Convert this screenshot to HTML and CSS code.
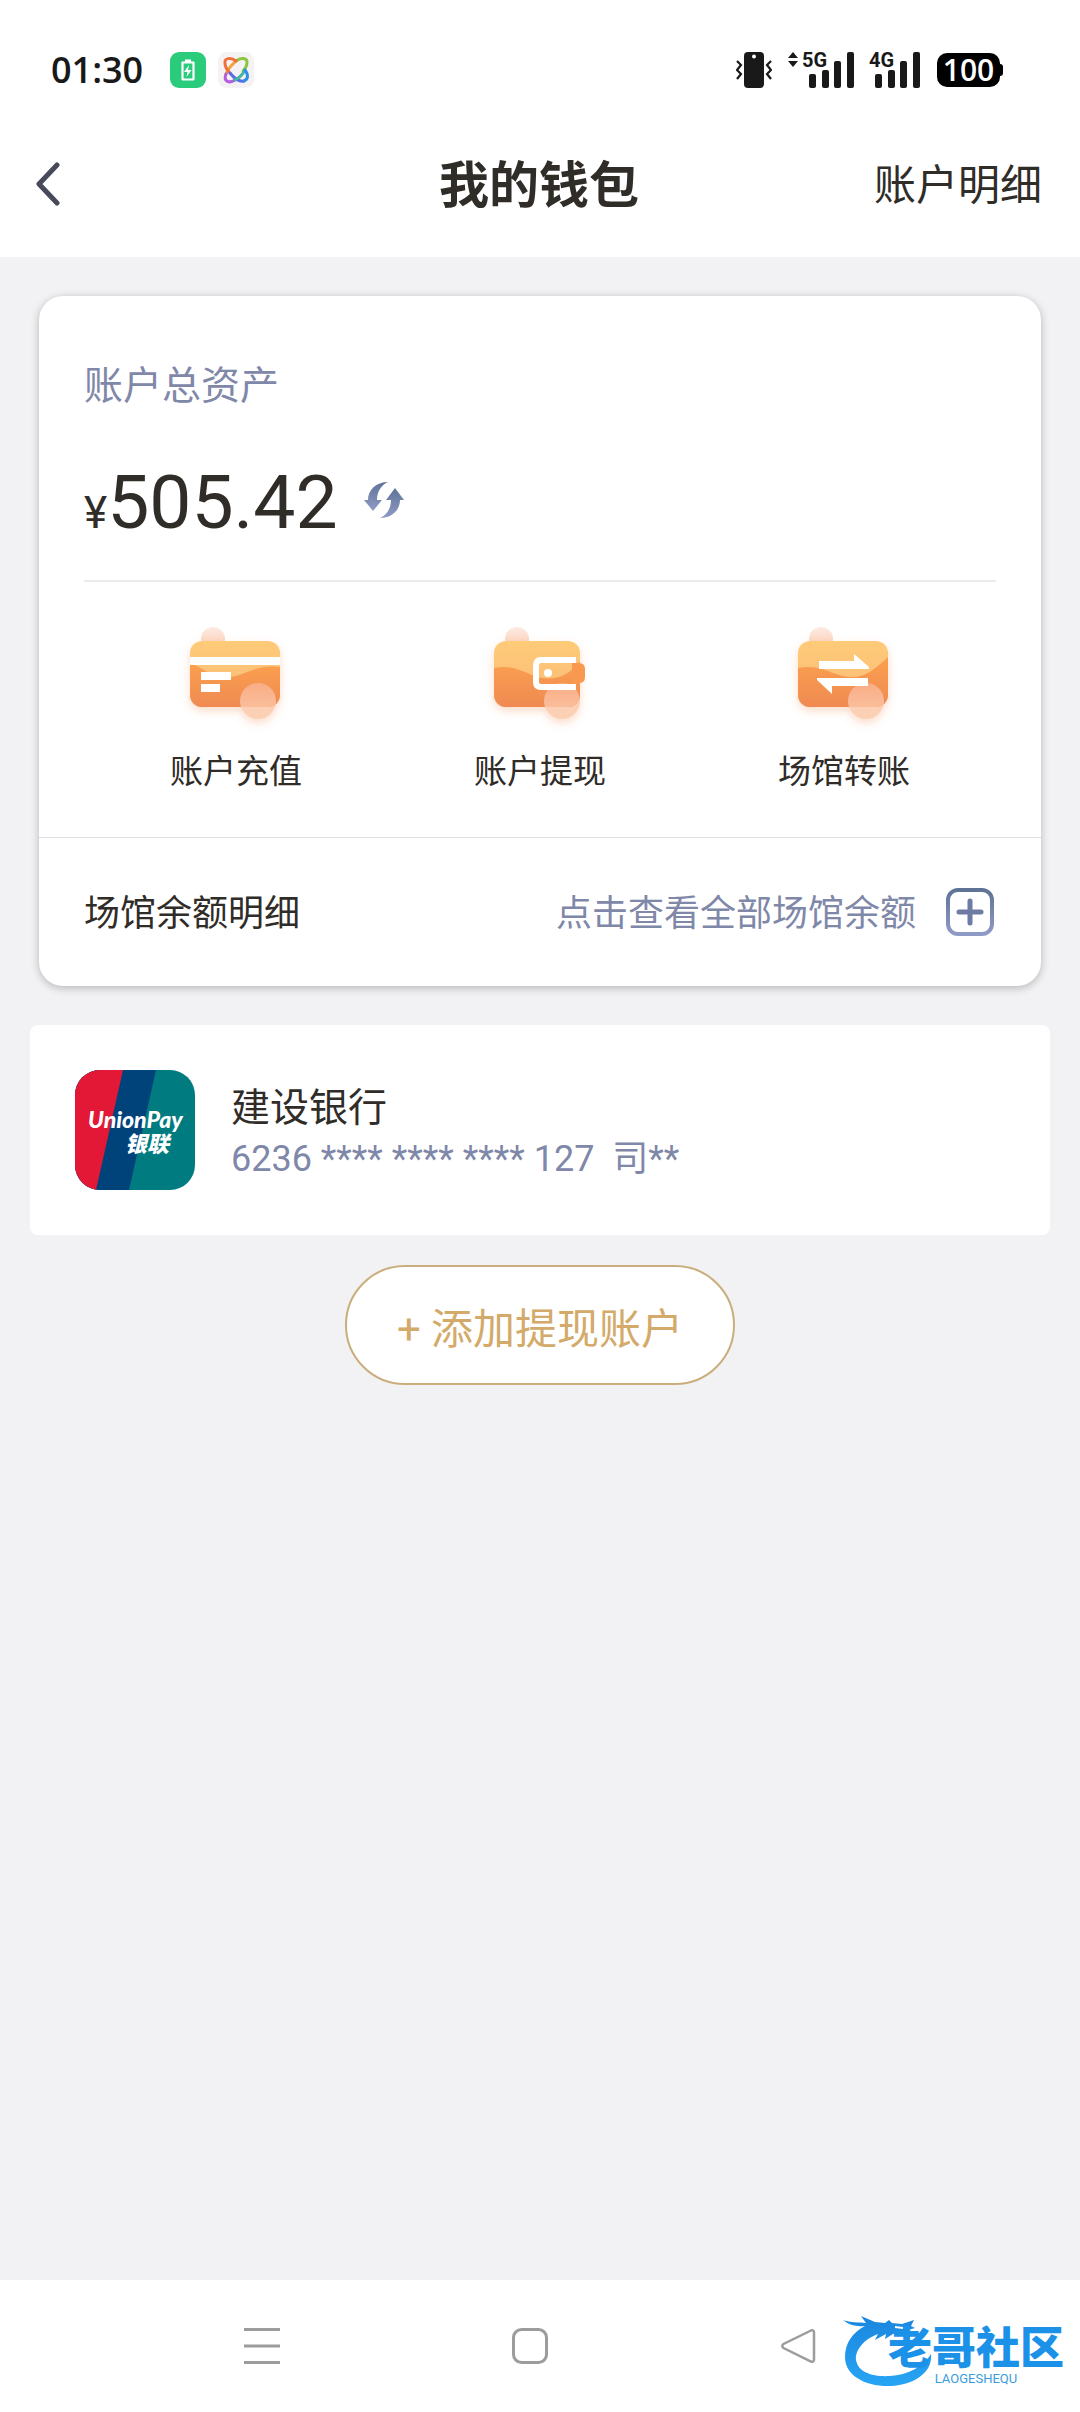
FILE: index.html
```html
<!DOCTYPE html>
<html lang="zh-CN">
<head>
<meta charset="utf-8">
<meta name="viewport" content="width=device-width, initial-scale=1">
<title>我的钱包</title>
<link rel="stylesheet" href="styles.css">
</head>
<body>
<div class="status">
  <div class="status-left">
    <time class="clock">01:30</time>
    <svg class="app-icon" viewBox="0 0 36 36" aria-hidden="true">
      <rect width="36" height="36" rx="9" fill="#2bcb7c"/>
      <path d="M15 8.500h6M12.500 10.500h11v17h-11z" fill="none" stroke="#fff" stroke-width="2.200" stroke-linejoin="round"/>
      <path d="M19 13l-5 7h3.500l-1 5 5-7H18z" fill="#fff"/>
    </svg>
    <svg class="app-icon" viewBox="0 0 36 36" aria-hidden="true">
      <rect width="36" height="36" rx="9" fill="#f5f2f4"/>
      <g fill="none" stroke-width="3" stroke-linecap="round">
        <path d="M18 9C23 5 29 6 29 10c0 4-1 6-4 9" stroke="#8cc63f"/>
        <path d="M18 9C15 12 10 16 8 22" stroke="#f2a238"/>
        <path d="M18 9C13 5 6 6 7 11c0 4 2 7 5 10" stroke="#f0703c"/>
        <path d="M8 22c-3 7 3 10 9 6" stroke="#b45be0"/>
        <path d="M12 21c4 5 9 9 14 8" stroke="#5b6be8"/>
        <path d="M17 28c4-2 8-6 10-10" stroke="#43b8a0"/>
        <path d="M26 29c5-2 4-7 1-11" stroke="#2f8fe6"/>
      </g>
    </svg>
  </div>
  <div class="status-right">
    <svg class="vibrate" viewBox="0 0 36 36" aria-hidden="true">
      <rect x="8" width="20" height="36" rx="4" fill="#191919"/>
      <circle cx="18" cy="4.500" r="2" fill="#fff"/>
      <path d="M1 9l4 4-4 5 4 4-4 5M35 9l-4 4 4 5-4 4 4 5" fill="none" stroke="#191919" stroke-width="2.200"/>
    </svg>
    <div class="signal signal-5g">
      <svg viewBox="0 0 66 36" aria-hidden="true">
        <g fill="#191919"><path d="M0 6L5 0l5 6zM0 9h10l-5 6z"/><rect x="21" y="22" width="7" height="14" rx="2"/><rect x="34" y="18" width="7" height="18" rx="2"/><rect x="46" y="9" width="7" height="27" rx="2"/><rect x="59" width="7" height="36" rx="2"/></g>
      </svg>
      <span class="signal-label">5G</span>
    </div>
    <div class="signal signal-4g">
      <svg viewBox="0 0 51 36" aria-hidden="true">
        <g fill="#191919"><rect x="6" y="22" width="7" height="14" rx="2"/><rect x="19" y="18" width="7" height="18" rx="2"/><rect x="31" y="9" width="7" height="27" rx="2"/><rect x="44" width="7" height="36" rx="2"/></g>
      </svg>
      <span class="signal-label">4G</span>
    </div>
    <div class="battery">100</div>
  </div>
</div>

<header class="header">
  <button class="back" type="button" aria-label="返回">
    <svg viewBox="0 0 24 44" aria-hidden="true"><path d="M21 3L3 22l18 19" fill="none" stroke="#464a5a" stroke-width="5" stroke-linecap="round" stroke-linejoin="round"/></svg>
  </button>
  <h1 class="title">我的钱包</h1>
  <a class="detail-link" href="#detail">账户明细</a>
</header>

<main class="main">
  <section class="wallet">
    <div class="assets">
      <h2 class="assets-label">账户总资产</h2>
      <div class="amount">
        <span class="currency">¥</span><span class="value">505.42</span>
        <button class="refresh" type="button" aria-label="刷新">
          <svg viewBox="0 0 40 36" aria-hidden="true">
            <defs><linearGradient id="slate" x1="0" y1="0" x2="0" y2="1"><stop offset="0" stop-color="#5f7397"/><stop offset="1" stop-color="#8f9ac6"/></linearGradient></defs>
            <path fill="url(#slate)" d="M24 0C12 0 4 8 4 18H0l9 11 9-11h-5C13 10 17 3 24 0z"/>
            <path fill="url(#slate)" d="M16 36c12 0 20-8 20-18h4L31 6l-9 12h5c0 8-4 15-11 18z"/>
          </svg>
        </button>
      </div>
    </div>
    <nav class="actions">
      <a class="action" href="#deposit">
        <svg class="action-icon" viewBox="0 0 100 100" aria-hidden="true">
          <defs>
            <linearGradient id="light" x1="0" y1="0" x2="0" y2="1"><stop offset="0" stop-color="#fecb78"/><stop offset="1" stop-color="#fab977"/></linearGradient>
            <linearGradient id="deep" x1="0" y1="0" x2="0" y2="1"><stop offset="0" stop-color="#fba04f"/><stop offset="1" stop-color="#ef8a52"/></linearGradient>
            <linearGradient id="bubble" x1="0" y1="0" x2="0" y2="1"><stop offset="0" stop-color="#f8ad86"/><stop offset="1" stop-color="#fcc6a5"/></linearGradient>
            <linearGradient id="bud" x1="0" y1="0" x2="0" y2="1"><stop offset="0" stop-color="#fdebe2"/><stop offset="1" stop-color="#fbc9ae"/></linearGradient>
            <filter id="glow" x="-20%" y="-20%" width="140%" height="150%"><feDropShadow dx="0" dy="4" stdDeviation="4" flood-color="#f58a50" flood-opacity=".3"/></filter>
            <clipPath id="card"><rect x="4" y="20" width="90" height="66" rx="12"/></clipPath>
          </defs>
          <circle cx="27" cy="18" r="12" fill="url(#bud)"/>
          <g filter="url(#glow)"><rect x="4" y="20" width="90" height="66" rx="12" fill="url(#light)"/><circle cx="72" cy="80" r="18" fill="#fcd0b4"/></g>
          <g clip-path="url(#card)"><path d="M4 42C20 48 28 60 50 55C70 48 76 44 94 46V86H4z" fill="url(#deep)"/><circle cx="72" cy="80" r="18" fill="url(#bubble)"/></g>
          <path d="M4 36h90v8H4zM15 51h30v8H15zM15 63h19v8H15z" fill="#fff"/>
        </svg>
        <span>账户充值</span>
      </a>
      <a class="action" href="#withdraw">
        <svg class="action-icon" viewBox="0 0 100 100" aria-hidden="true">
          <defs><clipPath id="purse"><rect x="4" y="20" width="86" height="66" rx="12"/></clipPath></defs>
          <circle cx="27" cy="18" r="12" fill="url(#bud)"/>
          <g filter="url(#glow)"><rect x="4" y="20" width="86" height="66" rx="12" fill="url(#light)"/><circle cx="72" cy="80" r="18" fill="#fcd0b4"/></g>
          <g clip-path="url(#purse)"><path d="M4 47C20 44 30 49 42 54C62 62 78 56 90 40V86H4z" fill="url(#deep)"/><circle cx="72" cy="80" r="18" fill="url(#bubble)"/></g>
          <path d="M82 42h7q6 0 6 6v8q0 6-6 6h-7z" fill="#f9994f"/>
          <path d="M86 39H51q-5 0-5 6v16q0 5 5 5h35" fill="none" stroke="#fff" stroke-width="6"/>
          <circle cx="58" cy="52" r="4" fill="#fff"/>
        </svg>
        <span>账户提现</span>
      </a>
      <a class="action" href="#transfer">
        <svg class="action-icon" viewBox="0 0 100 100" aria-hidden="true">
          <circle cx="27" cy="18" r="12" fill="url(#bud)"/>
          <g filter="url(#glow)"><rect x="4" y="20" width="90" height="66" rx="12" fill="url(#light)"/><circle cx="72" cy="80" r="18" fill="#fcd0b4"/></g>
          <g clip-path="url(#card)"><path d="M4 47C20 44 28 48 42 53C68 62 78 50 94 36V86H4z" fill="url(#deep)"/><circle cx="72" cy="80" r="18" fill="url(#bubble)"/></g>
          <path d="M25 40h35v-7l15 13v2H25zM74 65H38v8L23 59v-2h51z" fill="#fff"/>
        </svg>
        <span>场馆转账</span>
      </a>
    </nav>
    <div class="venues">
      <span>场馆余额明细</span>
      <button class="venues-toggle" type="button">
        <span>点击查看全部场馆余额</span>
        <svg viewBox="0 0 48 48" aria-hidden="true">
          <rect x="2" y="2" width="44" height="44" rx="10" fill="none" stroke="url(#slate)" stroke-width="4"/>
          <path d="M24 13v22M13 24h22" stroke="#6d7ba5" stroke-width="5" stroke-linecap="round"/>
        </svg>
      </button>
    </div>
  </section>

  <section class="bank">
    <svg class="bank-logo" viewBox="0 0 120 120" role="img" aria-label="UnionPay 银联">
      <defs><clipPath id="logo"><rect width="120" height="120" rx="25"/></clipPath></defs>
      <g clip-path="url(#logo)">
        <rect width="120" height="120" fill="#007b80"/>
        <path d="M0 0h81L54 120H0z" fill="#00437b"/>
        <path d="M0 0h48L21 120H0z" fill="#e21836"/>
      </g>
      <text class="logo-latin" x="13" y="58">UnionPay</text>
      <text class="logo-han" x="50" y="82">银联</text>
    </svg>
    <div class="bank-text">
      <div class="bank-name">建设银行</div>
      <div class="bank-number">6236 **** **** **** 127&nbsp; 司**</div>
    </div>
  </section>

  <button class="add" type="button">+ 添加提现账户</button>
</main>

<footer class="navbar">
  <button class="nav-key" type="button" aria-label="最近任务"><svg viewBox="0 0 36 36" aria-hidden="true"><path d="M0 1.500h36M0 18h36M0 34.500h36" stroke="#9c9c9c" stroke-width="3"/></svg></button>
  <button class="nav-key" type="button" aria-label="主屏幕"><svg viewBox="0 0 36 36" aria-hidden="true"><rect x="1.500" y="1.500" width="33" height="33" rx="8" fill="none" stroke="#9c9c9c" stroke-width="3"/></svg></button>
  <button class="nav-key" type="button" aria-label="返回键"><svg viewBox="0 0 36 36" aria-hidden="true"><path d="M31 2.500L3.500 16q-2.500 2 0 4L31 33.500q3 1 3-2v-27q0-3-3-2z" fill="none" stroke="#9c9c9c" stroke-width="2.500"/></svg></button>
  <div class="watermark">
    <svg class="dragon" viewBox="0 0 92 72" aria-hidden="true">
      <defs><linearGradient id="sea" x1="0" y1="0" x2="0" y2="1"><stop offset="0" stop-color="#1b86df"/><stop offset="1" stop-color="#27a5f4"/></linearGradient></defs>
      <path fill="url(#sea)" d="M0 4c8 3 15 2 23 3L18 0l14 6 10 1 4-3 3 3 10 1 12-4-3 6 4 2-7 2 5 2-4 5-8-4-8 1-8 5 1-5-11 6 3-6C21 23 12 34 13 44c2 13 18 17 34 16 18-1 33-9 41-22 2 19-18 31-40 32C23 71 2 60 2 41 2 27 10 16 22 10 13 11 6 9 0 4z"/>
      <path d="M52 11l8 1" stroke="#fff" stroke-width="2"/>
    </svg>
    <div class="brand"><span class="brand-han">老哥社区</span><span class="brand-latin">LAOGESHEQU</span></div>
  </div>
</footer>
</body>
</html>
```
FILE: styles.css
```css
* { box-sizing: border-box; }

body {
  margin: 0;
  min-height: 100vh;
  display: flex;
  flex-direction: column;
  background: #f2f2f4;
  color: #302c28;
  font-family: Roboto, "Noto Sans CJK SC", sans-serif;
  font-size: 36px;
}

button {
  margin: 0;
  padding: 0;
  border: 0;
  background: none;
  color: inherit;
  font: inherit;
}

a { color: inherit; text-decoration: none; }
svg { display: block; flex: none; }
h1, h2 { margin: 0; }

/* Status bar */
.status {
  height: 110px;
  padding: 30px 80px 0 51px;
  display: flex;
  align-items: center;
  justify-content: space-between;
  background: #fff;
}
.status-left, .status-right { display: flex; align-items: center; }
.clock {
  margin-right: 27px;
  color: #191919;
  font-family: "Open Sans", sans-serif;
  font-size: 36px;
  font-weight: 600;
  line-height: 40px;
}
.app-icon { width: 36px; height: 36px; margin-right: 12px; }
.vibrate { width: 36px; height: 36px; margin-right: 16px; }
.signal { position: relative; height: 36px; }
.signal svg { height: 36px; }
.signal-5g { width: 66px; margin-right: 15px; }
.signal-4g { width: 51px; margin-right: 17px; }
.signal-label {
  position: absolute;
  top: -2px;
  left: 0;
  color: #191919;
  font-size: 20px;
  font-weight: 700;
  line-height: 20px;
}
.signal-5g .signal-label { left: 14px; }
.battery {
  position: relative;
  width: 63px;
  height: 34px;
  border-radius: 10px;
  background: #000;
  color: #fff;
  font-family: "Open Sans", sans-serif;
  font-size: 30px;
  font-weight: 600;
  line-height: 34px;
  text-align: center;
}
.battery::after {
  content: "";
  position: absolute;
  top: 11px;
  right: -3px;
  width: 6px;
  height: 12px;
  border-radius: 3px;
  background: #000;
}

/* Page header */
.header {
  height: 147px;
  padding: 0 38px 0 36px;
  display: grid;
  grid-template-columns: 1fr auto 1fr;
  align-items: center;
  background: #fff;
}
.back { justify-self: start; }
.back svg { width: 24px; height: 44px; }
.title { padding-top: 4px; font-size: 50px; font-weight: 700; line-height: 72px; }
.detail-link { padding-top: 4px; justify-self: end; font-size: 42px; line-height: 60px; }

.main { flex: 1; display: flex; flex-direction: column; }

/* Balance card */
.wallet {
  margin: 39px 39px 0;
  border-radius: 24px;
  background: #fff;
  box-shadow: 0 2px 8px rgba(0, 0, 0, .25);
}
.assets {
  margin: 0 45px;
  padding: 62px 0 21px;
  border-bottom: 2px solid #ebebeb;
}
.assets-label {
  color: #7f88a9;
  font-size: 39px;
  font-weight: 400;
  line-height: 56px;
}
.amount {
  margin-top: 42px;
  display: flex;
  align-items: baseline;
  line-height: 92px;
}
.currency { font-size: 44px; }
.value { font-size: 75px; }
.refresh { margin-left: 26px; padding-bottom: 16px; align-self: center; }
.refresh svg { width: 40px; height: 36px; }

.actions {
  padding: 39px 45px 41px;
  display: grid;
  grid-template-columns: repeat(3, 1fr);
}
.action {
  display: flex;
  flex-direction: column;
  align-items: center;
  gap: 27px;
  font-size: 33px;
  line-height: 48px;
}
.action-icon { width: 100px; height: 100px; overflow: visible; }

.venues {
  height: 149px;
  padding: 0 47px 0 45px;
  display: flex;
  align-items: center;
  justify-content: space-between;
  border-top: 1px solid #dfdfdf;
}
.venues > span, .venues-toggle > span { padding-bottom: 4px; }
.venues-toggle {
  display: flex;
  align-items: center;
  gap: 30px;
  color: #7f88a9;
}
.venues-toggle svg { width: 48px; height: 48px; }

/* Linked bank card */
.bank {
  margin: 39px 30px 0;
  padding: 45px;
  display: flex;
  align-items: center;
  gap: 36px;
  border-radius: 8px;
  background: #fff;
}
.bank-logo { width: 120px; height: 120px; }
.logo-latin, .logo-han { fill: #fff; font-style: italic; }
.logo-latin { font-family: Lato, sans-serif; font-size: 23px; font-weight: 900; }
.logo-han { font-family: "Noto Sans CJK SC", sans-serif; font-size: 22px; font-weight: 900; }
.bank-text { padding-top: 8px; line-height: 51px; }
.bank-name { font-size: 39px; }
.bank-number { color: #7f88a9; }

.add {
  align-self: center;
  margin-top: 30px;
  height: 120px;
  padding: 0 50px;
  border: 2px solid #c9ae7c;
  border-radius: 60px;
  background: #fff;
  color: #d3aa6a;
  font-size: 42px;
}

/* System navigation */
.navbar {
  position: relative;
  height: 132px;
  padding: 0 148px 0 128px;
  display: grid;
  grid-template-columns: repeat(3, 1fr);
  align-items: center;
  background: #fff;
}
.nav-key { justify-self: center; }
.nav-key svg { width: 36px; height: 36px; }

.watermark { position: absolute; right: 16px; bottom: 24px; display: flex; }
.dragon { width: 92px; height: 72px; margin-right: -47px; }
.brand { display: flex; flex-direction: column; align-items: center; padding-top: 10px; }
.brand-han { color: #1b91e8; font-size: 44px; font-weight: 900; line-height: 46px; }
.brand-latin { color: #3b9ce0; font-size: 13px; line-height: 14px; }
```
